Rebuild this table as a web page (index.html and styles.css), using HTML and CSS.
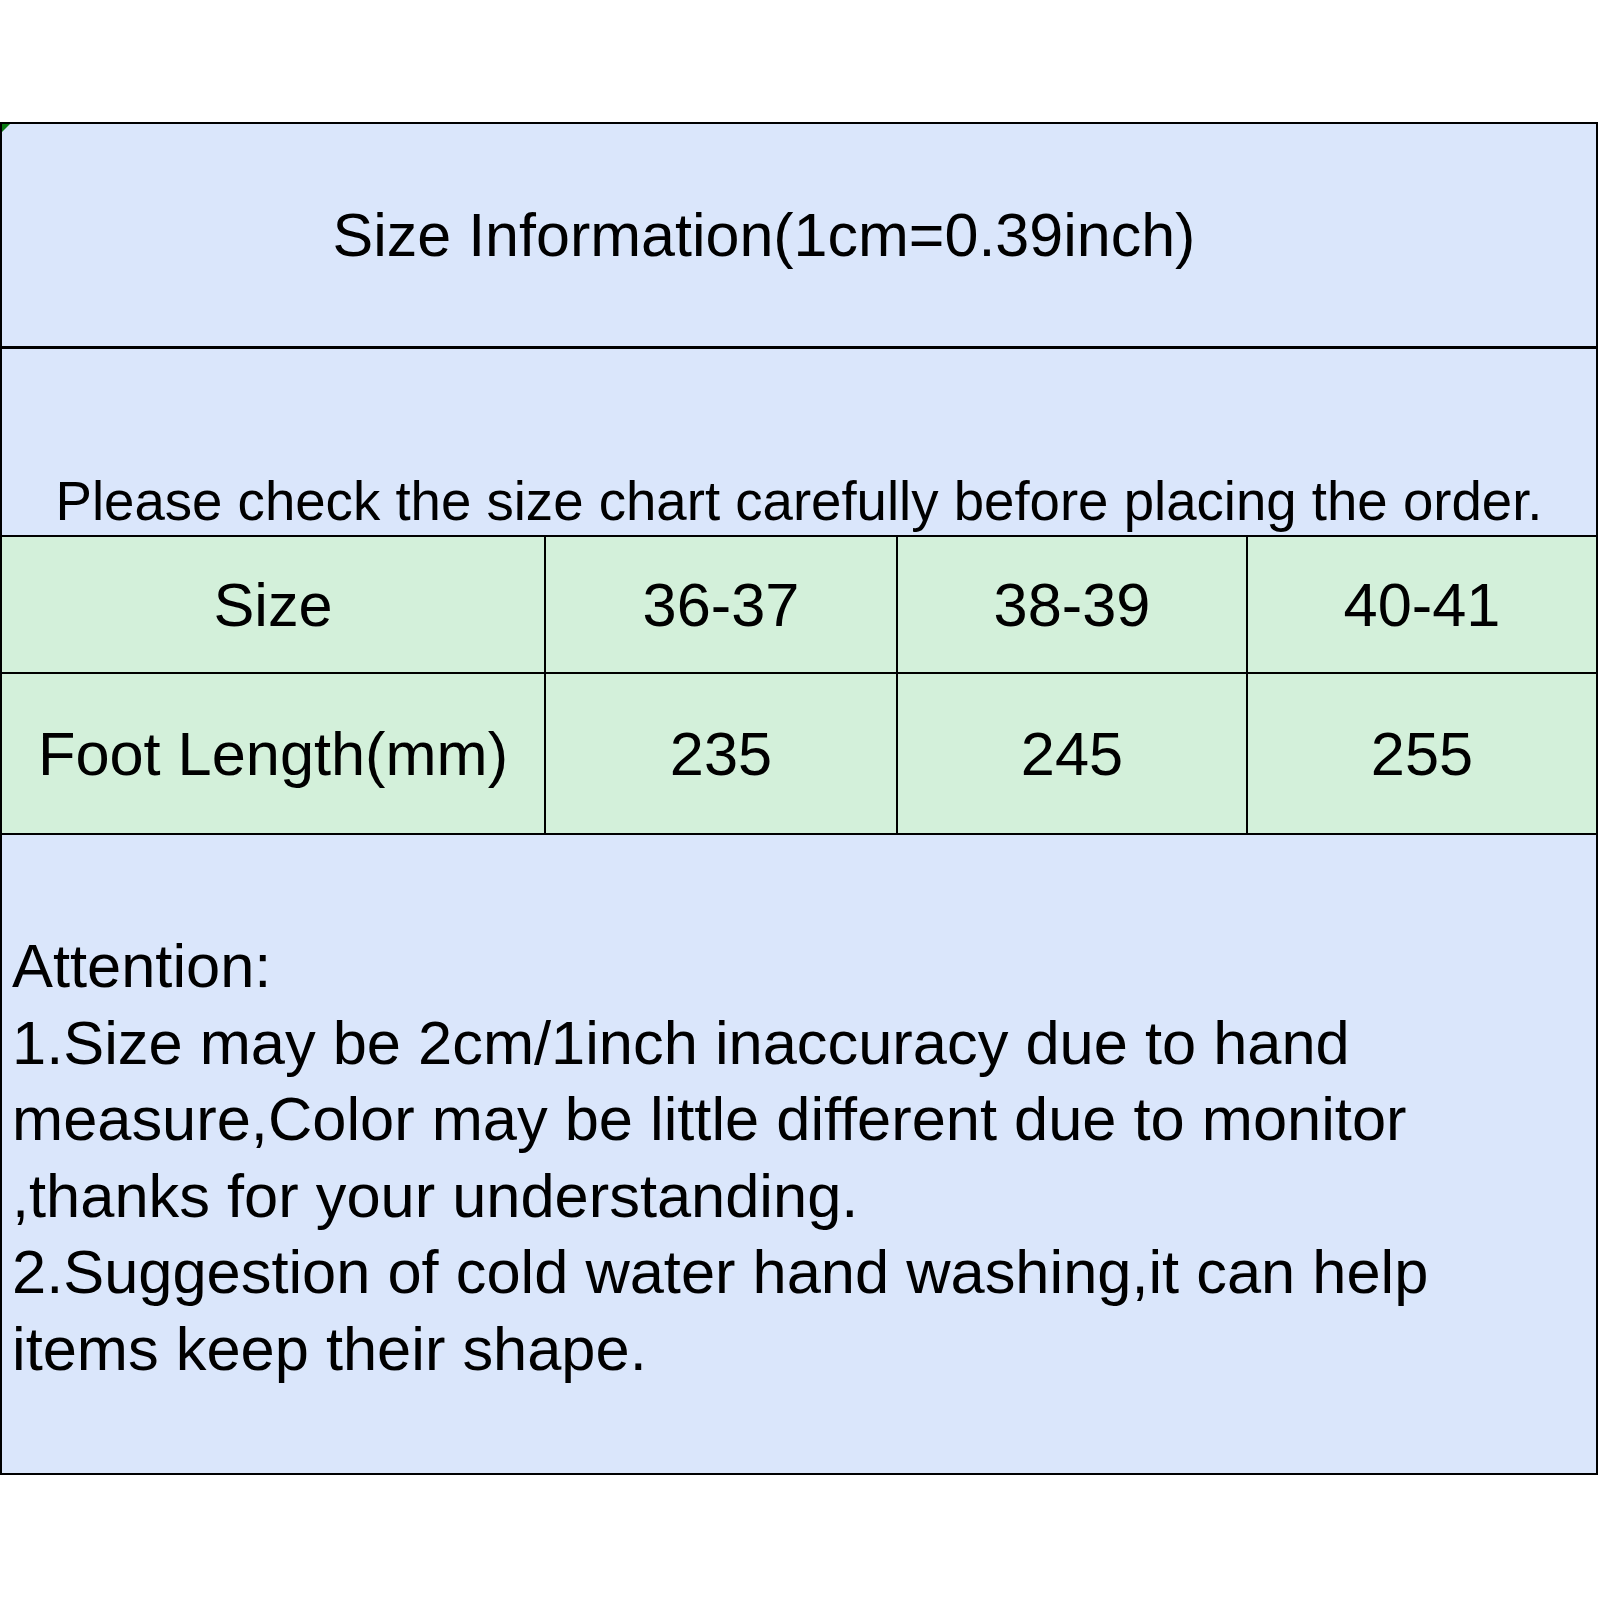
FILE: index.html
```html
<!DOCTYPE html>
<html lang="en">
<head>
<meta charset="utf-8">
<title>Size Information</title>
<link rel="stylesheet" href="styles.css">
</head>
<body>
<main class="sheet">
  <div class="title">Size Information(1cm=0.39inch)</div>
  <div class="note">Please check the size chart carefully before placing the order.</div>
  <div class="chart">
    <div class="cell">Size</div>
    <div class="cell">36-37</div>
    <div class="cell">38-39</div>
    <div class="cell">40-41</div>
    <div class="cell">Foot Length(mm)</div>
    <div class="cell">235</div>
    <div class="cell">245</div>
    <div class="cell">255</div>
  </div>
  <div class="attention">
    <p>Attention:</p>
    <p>1.Size may be 2cm/1inch inaccuracy due to hand</p>
    <p>measure,Color may be little different due to monitor</p>
    <p>,thanks for your understanding.</p>
    <p>2.Suggestion of cold water hand washing,it can help</p>
    <p>items keep their shape.</p>
  </div>
</main>
</body>
</html>
```

FILE: styles.css
```css
html, body {
  margin: 0;
  padding: 0;
  background: #ffffff;
}

body {
  padding-top: 122px;
  font-family: "Liberation Sans", Arial, sans-serif;
  color: #000000;
}

.sheet {
  position: relative;
  width: 1598px;
  box-sizing: border-box;
  border: 2px solid #000000;
  background: #dae6fb;
}

.sheet::before {
  content: "";
  position: absolute;
  left: 0;
  top: 0;
  width: 0;
  height: 0;
  border-top: 8px solid #0b7a12;
  border-right: 8px solid transparent;
}

.title {
  height: 222px;
  border-bottom: 3px solid #000000;
  display: flex;
  align-items: center;
  justify-content: center;
  padding-right: 70px;
  font-size: 61px;
  line-height: 1;
}

.note {
  height: 188px;
  box-sizing: border-box;
  border-bottom: 2px solid #000000;
  display: flex;
  align-items: flex-end;
  justify-content: center;
  padding-bottom: 5px;
  font-size: 54.6px;
  line-height: 1;
}

.chart {
  display: grid;
  grid-template-columns: 542px 350px 348px 1fr;
  grid-template-rows: 135px 159px;
  gap: 2px;
  background: #000000;
  border-bottom: 2px solid #000000;
}

.cell {
  background: #d3f0da;
  display: flex;
  align-items: center;
  justify-content: center;
  font-size: 61.3px;
  line-height: 1;
  padding-top: 3px;
}

.attention {
  height: 638px;
  box-sizing: border-box;
  padding: 93px 0 0 10px;
  font-size: 61.4px;
  line-height: 76.5px;
}

.attention p {
  margin: 0;
  white-space: nowrap;
}
```
